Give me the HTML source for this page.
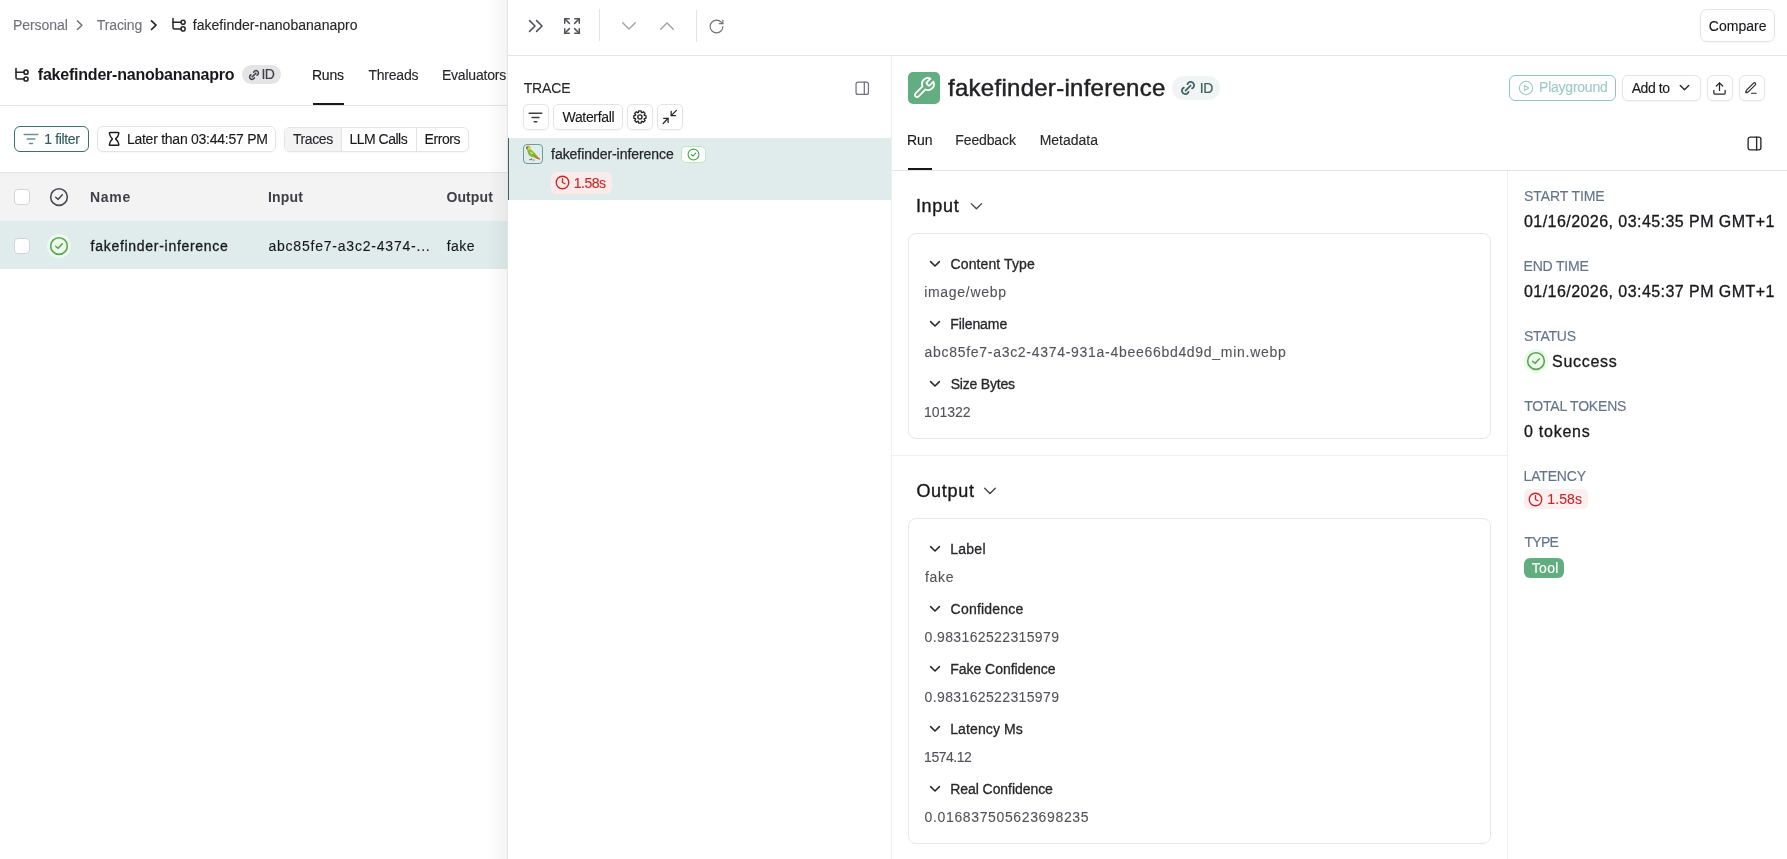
<!DOCTYPE html>
<html><head><meta charset="utf-8">
<style>
*{box-sizing:border-box;margin:0;padding:0}
html,body{will-change:transform;width:1787px;height:859px;overflow:hidden;background:#fff;font-family:"Liberation Sans",sans-serif;color:#18181b;font-size:14px;position:relative}
.a{position:absolute}
.t{position:absolute;white-space:nowrap;line-height:1}
svg.a{display:block;overflow:visible}
</style></head><body>
<div class="t" style="left:12.90px;top:18.00px;font-size:14px;color:#71717a;letter-spacing:-0.057px;-webkit-text-stroke:0.12px #71717a;">Personal</div>
<svg class="a" style="left:74px;top:18px" width="12" height="14" viewBox="74 18 12 14" fill="none" stroke="#71717a" stroke-width="1.5" stroke-linecap="round" stroke-linejoin="round"><path d="M77.4,20.9 L81.9,25.2 L77.4,29.5"/></svg>
<div class="t" style="left:96.70px;top:18.00px;font-size:14px;color:#71717a;letter-spacing:-0.083px;-webkit-text-stroke:0.12px #71717a;">Tracing</div>
<svg class="a" style="left:148px;top:18px" width="12" height="14" viewBox="148 18 12 14" fill="none" stroke="#27272a" stroke-width="1.7" stroke-linecap="round" stroke-linejoin="round"><path d="M151.5,20.9 L156,25.2 L151.5,29.5"/></svg>
<svg class="a" style="left:170px;top:16px" width="18" height="18" viewBox="170 16 18 18" fill="none" stroke="#27272a" stroke-width="1.5" stroke-linecap="round" stroke-linejoin="round"><path d="M173,18.6 V27.4 a1.5,1.5 0 0 0 1.5,1.5 H181"/><path d="M173,22.2 H181"/><circle cx="183.1" cy="22.2" r="2.05"/><circle cx="183.1" cy="28.9" r="2.05"/></svg>
<div class="t" style="left:192.80px;top:18.00px;font-size:14px;color:#27272a;letter-spacing:0.022px;-webkit-text-stroke:0.12px #27272a;">fakefinder-nanobananapro</div>
<svg class="a" style="left:12px;top:65px" width="20" height="20" viewBox="12 65 20 20" fill="none" stroke="#27272a" stroke-width="1.6" stroke-linecap="round" stroke-linejoin="round"><path d="M16,68.6 V77.5 a1.5,1.5 0 0 0 1.5,1.5 H24"/><path d="M16,72.2 H24"/><circle cx="26" cy="72.2" r="2.05"/><circle cx="26" cy="79" r="2.05"/></svg>
<div class="t" style="left:37.80px;top:67.00px;font-size:16px;color:#18181b;font-weight:bold;letter-spacing:-0.217px;">fakefinder-nanobananapro</div>
<div class="a" style="left:242px;top:65px;width:39px;height:19px;border-radius:10px;background:#e4e4e7"></div>
<svg class="a" style="left:243.95px;top:64.85px" width="20" height="20" viewBox="-10 -10 20 20" fill="none" stroke="#3f3f46" stroke-width="2.083" stroke-linecap="round"><g transform="scale(0.72)"><path d="M-0.495,-3.863 A3.4,3.4 0 1 1 4.137,0.381"/><path d="M0.495,3.863 A3.4,3.4 0 1 1 -4.137,-0.381"/><path d="M-2.45,2.55 L2.55,-2.45"/></g></svg>
<div class="t" style="left:261.60px;top:67.00px;font-size:14px;color:#3f3f46;letter-spacing:-0.700px;-webkit-text-stroke:0.15px #3f3f46;">ID</div>
<div class="t" style="left:311.90px;top:68.00px;font-size:14px;color:#18181b;letter-spacing:-0.167px;-webkit-text-stroke:0.12px #18181b;">Runs</div>
<div class="t" style="left:368.40px;top:68.00px;font-size:14px;color:#27272a;letter-spacing:-0.217px;-webkit-text-stroke:0.12px #27272a;">Threads</div>
<div class="t" style="left:441.90px;top:68.00px;font-size:14px;color:#27272a;letter-spacing:-0.200px;-webkit-text-stroke:0.12px #27272a;">Evaluators</div>
<div class="a" style="left:313px;top:103px;width:31px;height:2px;background:#18181b"></div>
<div class="a" style="left:0px;top:105px;width:507px;height:1px;background:#e4e4e7"></div>
<div class="a" style="left:14px;top:126px;width:75px;height:26px;border:1px solid #3f6e6c;border-radius:6px"></div>
<svg class="a" style="left:22px;top:130px;" width="18" height="18" viewBox="0 0 24 24" fill="none" stroke="#6f918f" stroke-width="2.1" stroke-linecap="round" stroke-linejoin="round"><path d="M3 6h18"/><path d="M7 12h10"/><path d="M10 18h4"/></svg>
<div class="t" style="left:44.30px;top:132.00px;font-size:14px;color:#2c5c5a;letter-spacing:-0.371px;-webkit-text-stroke:0.12px #2c5c5a;">1 filter</div>
<div class="a" style="left:97px;top:126px;width:179px;height:26px;border:1px solid #e4e4e7;border-radius:6px;box-shadow:0 1px 2px rgba(0,0,0,0.04)"></div>
<svg class="a" style="left:104px;top:128px" width="20" height="22" viewBox="104 128 20 22" fill="none" stroke="#18181b" stroke-width="1.45" stroke-linecap="round" stroke-linejoin="round"><path d="M110.2,132.5 H118 Q118.9,132.5 118.8,133.5 C118.6,135.6 117.4,137.3 115.6,138.9 C117.4,140.5 118.6,142.2 118.8,144.3 Q118.9,145.3 118,145.3 H110.2 Q109.3,145.3 109.4,144.3 C109.6,142.2 110.8,140.5 112.4,138.9 C110.8,137.3 109.6,135.6 109.4,133.5 Q109.3,132.5 110.2,132.5 Z"/></svg>
<div class="t" style="left:126.90px;top:132.00px;font-size:14px;color:#18181b;letter-spacing:-0.252px;-webkit-text-stroke:0.12px #18181b;">Later than 03:44:57 PM</div>
<div class="a" style="left:284px;top:127px;width:185px;height:25px;border:1px solid #e4e4e7;border-radius:6px;box-shadow:0 1px 2px rgba(0,0,0,0.04);overflow:hidden"></div>
<div class="a" style="left:285px;top:128px;width:56px;height:23px;background:#f4f4f5;border-radius:5px 0 0 5px"></div>
<div class="a" style="left:341px;top:128px;width:1px;height:23px;background:#e4e4e7"></div>
<div class="a" style="left:416px;top:128px;width:1px;height:23px;background:#e4e4e7"></div>
<div class="t" style="left:293.00px;top:132.00px;font-size:14px;color:#27272a;letter-spacing:-0.420px;-webkit-text-stroke:0.12px #27272a;">Traces</div>
<div class="t" style="left:349.40px;top:132.00px;font-size:14px;color:#18181b;letter-spacing:-0.487px;-webkit-text-stroke:0.12px #18181b;">LLM Calls</div>
<div class="t" style="left:424.50px;top:132.00px;font-size:14px;color:#18181b;letter-spacing:-0.400px;-webkit-text-stroke:0.12px #18181b;">Errors</div>
<div class="a" style="left:0px;top:172px;width:507px;height:1px;background:#e4e4e7"></div>
<div class="a" style="left:0px;top:173px;width:507px;height:48px;background:#f3f3f4"></div>
<div class="a" style="left:0px;top:221px;width:507px;height:48px;background:#dfeceb"></div>
<div class="a" style="left:14px;top:189px;width:16px;height:16px;background:#fff;border:1px solid #d4d4d8;border-radius:4px"></div>
<div class="a" style="left:14px;top:238px;width:16px;height:16px;background:#fff;border:1px solid #d4d4d8;border-radius:4px"></div>
<svg class="a" style="left:49px;top:187px;" width="20" height="20" viewBox="0 0 24 24" fill="none" stroke="#4a4a55" stroke-width="1.9" stroke-linecap="round" stroke-linejoin="round"><circle cx="12" cy="12" r="10"/><path d="M8 12.3 L11 14.8 L16 9.4"/></svg>
<div class="a" style="left:47px;top:234px;width:24px;height:24px;border-radius:50%;background:#eef8ee"></div>
<svg class="a" style="left:49px;top:236px;" width="20" height="20" viewBox="0 0 24 24" fill="none" stroke="#55a84c" stroke-width="1.9" stroke-linecap="round" stroke-linejoin="round"><circle cx="12" cy="12" r="10"/><path d="M8 12.3 L11 14.8 L16 9.4"/></svg>
<div class="t" style="left:89.90px;top:190.00px;font-size:14px;color:#3f3f46;font-weight:bold;letter-spacing:0.767px;">Name</div>
<div class="t" style="left:268.10px;top:190.00px;font-size:14px;color:#3f3f46;font-weight:bold;letter-spacing:0.125px;">Input</div>
<div class="t" style="left:446.40px;top:190.00px;font-size:14px;color:#3f3f46;font-weight:bold;letter-spacing:0.120px;">Output</div>
<div class="t" style="left:90.60px;top:239.00px;font-size:14px;color:#18181b;letter-spacing:0.711px;-webkit-text-stroke:0.3px #18181b;">fakefinder-inference</div>
<div class="t" style="left:268.40px;top:239.00px;font-size:14px;color:#18181b;letter-spacing:0.790px;-webkit-text-stroke:0.12px #18181b;">abc85fe7-a3c2-4374-...</div>
<div class="t" style="left:446.80px;top:239.00px;font-size:14px;color:#18181b;letter-spacing:0.433px;-webkit-text-stroke:0.12px #18181b;">fake</div>
<div class="a" style="left:487px;top:0px;width:20px;height:859px;background:linear-gradient(to right,rgba(0,0,0,0),rgba(0,0,0,0.045))"></div>
<div class="a" style="left:507px;top:0px;width:1px;height:859px;background:#e4e4e7"></div>
<svg class="a" style="left:526px;top:17px" width="20" height="18" viewBox="526 17 20 18" fill="none" stroke="#52525b" stroke-width="1.6" stroke-linecap="round" stroke-linejoin="round"><path d="M529.6,20.6 L535,26 L529.6,31.4"/><path d="M536.6,20.6 L542,26 L536.6,31.4"/></svg>
<svg class="a" style="left:562px;top:16px" width="20" height="20" viewBox="562 16 20 20" fill="none" stroke="#52525b" stroke-width="1.5" stroke-linecap="round" stroke-linejoin="round"><path d="M564.7,23.2 V18.7 H569.2"/><path d="M564.7,18.7 L569.4,23.4"/><path d="M574.8,18.7 H579.3 V23.2"/><path d="M579.3,18.7 L574.6,23.4"/><path d="M564.7,28.8 V33.3 H569.2"/><path d="M564.7,33.3 L569.4,28.6"/><path d="M574.8,33.3 H579.3 V28.8"/><path d="M579.3,33.3 L574.6,28.6"/></svg>
<div class="a" style="left:599px;top:9px;width:1px;height:32px;background:#e4e4e7"></div>
<svg class="a" style="left:620px;top:20px" width="18" height="12" viewBox="620 20 18 12" fill="none" stroke="#a1a1aa" stroke-width="1.4" stroke-linecap="round" stroke-linejoin="round"><path d="M622.7,22.7 L629,29 L635.3,22.7"/></svg>
<svg class="a" style="left:658px;top:20px" width="18" height="12" viewBox="658 20 18 12" fill="none" stroke="#a1a1aa" stroke-width="1.4" stroke-linecap="round" stroke-linejoin="round"><path d="M660.7,29.3 L667,23 L673.3,29.3"/></svg>
<div class="a" style="left:696px;top:10px;width:1px;height:32px;background:#e4e4e7"></div>
<svg class="a" style="left:707.5px;top:17.5px;" width="17" height="17" viewBox="0 0 24 24" fill="none" stroke="#71717a" stroke-width="1.6" stroke-linecap="round" stroke-linejoin="round"><path d="M21 12a9 9 0 1 1-9-9c2.52 0 4.93 1 6.74 2.74L21 8"/><path d="M21 3v5h-5"/></svg>
<div class="a" style="left:1700px;top:9px;width:75px;height:33px;border:1px solid #e4e4e7;border-radius:7px;box-shadow:0 1px 2px rgba(0,0,0,0.04)"></div>
<div class="t" style="left:1708.80px;top:19.00px;font-size:14px;color:#18181b;letter-spacing:0.033px;-webkit-text-stroke:0.12px #18181b;">Compare</div>
<div class="a" style="left:508px;top:55px;width:1279px;height:1px;background:#e4e4e7"></div>
<div class="t" style="left:523.70px;top:81.00px;font-size:14px;color:#27272a;letter-spacing:-0.150px;-webkit-text-stroke:0.12px #27272a;">TRACE</div>
<svg class="a" style="left:853.5px;top:79.5px;" width="16.5" height="16.5" viewBox="0 0 24 24" fill="none" stroke="#71717a" stroke-width="1.8" stroke-linecap="round" stroke-linejoin="round"><rect width="18" height="18" x="3" y="3" rx="3"/><path d="M15 3v18"/></svg>
<div class="a" style="left:523px;top:104px;width:26px;height:26px;border:1px solid #e4e4e7;border-radius:5px;box-shadow:0 1px 2px rgba(0,0,0,0.04)"></div>
<svg class="a" style="left:527px;top:109px;" width="17" height="17" viewBox="0 0 24 24" fill="none" stroke="#3f3f46" stroke-width="1.8" stroke-linecap="round" stroke-linejoin="round"><path d="M3 6h18"/><path d="M7 12h10"/><path d="M10 18h4"/></svg>
<div class="a" style="left:553px;top:104px;width:70px;height:26px;border:1px solid #e4e4e7;border-radius:5px;box-shadow:0 1px 2px rgba(0,0,0,0.04)"></div>
<div class="t" style="left:562.60px;top:110.00px;font-size:14px;color:#18181b;letter-spacing:-0.350px;-webkit-text-stroke:0.12px #18181b;">Waterfall</div>
<div class="a" style="left:627px;top:104px;width:26px;height:26px;border:1px solid #e4e4e7;border-radius:5px;box-shadow:0 1px 2px rgba(0,0,0,0.04)"></div>
<svg class="a" style="left:630px;top:107px" width="20" height="20" viewBox="630 107 20 20" fill="none" stroke="#27272a" stroke-width="1.35" stroke-linecap="round" stroke-linejoin="round"><path d="M638.35,112.51 L638.71,110.86 L641.09,110.86 L641.45,112.51 L641.98,112.73 L643.39,111.82 L645.08,113.51 L644.17,114.92 L644.39,115.45 L646.04,115.81 L646.04,118.19 L644.39,118.55 L644.17,119.08 L645.08,120.49 L643.39,122.18 L641.98,121.27 L641.45,121.49 L641.09,123.14 L638.71,123.14 L638.35,121.49 L637.82,121.27 L636.41,122.18 L634.72,120.49 L635.63,119.08 L635.41,118.55 L633.76,118.19 L633.76,115.81 L635.41,115.45 L635.63,114.92 L634.72,113.51 L636.41,111.82 L637.82,112.73Z"/><circle cx="639.9" cy="117" r="2.1"/></svg>
<div class="a" style="left:657px;top:104px;width:26px;height:26px;border:1px solid #e4e4e7;border-radius:5px;box-shadow:0 1px 2px rgba(0,0,0,0.04)"></div>
<svg class="a" style="left:660px;top:107px" width="20" height="20" viewBox="660 107 20 20" fill="none" stroke="#27272a" stroke-width="1.25" stroke-linecap="round" stroke-linejoin="round"><path d="M671.2,111.3 V115.6 H675.5"/><path d="M671.2,115.6 L676.4,110.4"/><path d="M663.6,118.3 H668.1 V122.6"/><path d="M668.1,118.3 L663.2,123.5"/></svg>
<div class="a" style="left:508px;top:138px;width:383px;height:62px;background:#dfeceb"></div>
<div class="a" style="left:508px;top:138px;width:1.3px;height:62px;background:#3d625f"></div>
<div class="a" style="left:523px;top:144px;width:20px;height:20px;border:1px solid #6a9e9d;border-radius:4px"></div>
<svg class="a" style="left:520px;top:141px" width="26" height="26" viewBox="0 0 26 26"><path d="M7.2,9 C8,7.5 10,7.6 11.2,8.8 C13.5,10.5 16,13.5 18,16 L20.3,18.6 C18.5,18.2 16.5,17.4 15,16.8 C13,16 11,15.8 10,15 C8.5,13.8 7.5,11.5 7.2,9z" fill="#7cb83a"/><path d="M9.5,10.5 C11,10 12.5,11.2 13.5,12.5 L11,13.5z" fill="#c5e04a"/><path d="M14,13.5 C15.5,14.5 17,15.8 18,16.5 L20.3,18.6 C18.5,18.3 16.8,17.6 15.5,17 z" fill="#d2702a"/><path d="M17,16 L18.5,17 L20.3,18.6 L18.6,18z" fill="#c83a22"/><circle cx="8.6" cy="6.9" r="2.3" fill="#d9c83a"/><path d="M6.3,6.2 C6.8,5.6 7.4,5.6 7.6,6 L7.4,8.6 C6.6,8.6 6.1,7.4 6.3,6.2z" fill="#555a60"/><path d="M7,5.6 C7.6,5 8.4,5 8.6,5.3 L7.8,6.3z" fill="#c0502a"/><path d="M9.2,18.6 H12 M11.5,17.4 L11.8,18.6 M12.6,19 H14.6" stroke="#6b6b6b" stroke-width="0.9" fill="none"/></svg>
<div class="t" style="left:551.10px;top:147.00px;font-size:14px;color:#27272a;letter-spacing:-0.058px;-webkit-text-stroke:0.25px #27272a;">fakefinder-inference</div>
<div class="a" style="left:681px;top:146px;width:25px;height:17px;background:#fff;border:1px solid #bbe8c0;border-radius:5px"></div>
<svg class="a" style="left:687px;top:148px;" width="13" height="13" viewBox="0 0 24 24" fill="none" stroke="#43a047" stroke-width="2" stroke-linecap="round" stroke-linejoin="round"><circle cx="12" cy="12" r="10"/><path d="M8 12.3 L11 14.8 L16 9.4"/></svg>
<div class="a" style="left:551px;top:172px;width:61px;height:22px;background:#fcebeb;border-radius:6px"></div>
<svg class="a" style="left:555px;top:175px;" width="15" height="15" viewBox="0 0 24 24" fill="none" stroke="#c62828" stroke-width="2.2" stroke-linecap="round" stroke-linejoin="round"><circle cx="12" cy="12" r="10"/><polyline points="12 6 12 12 16 14"/></svg>
<div class="t" style="left:573.80px;top:176.00px;font-size:14px;color:#c62828;letter-spacing:-0.500px;-webkit-text-stroke:0.12px #c62828;">1.58s</div>
<div class="a" style="left:891px;top:56px;width:1px;height:803px;background:#efeff1"></div>
<div class="a" style="left:908px;top:72px;width:32px;height:32px;background:#62ae81;border-radius:5px"></div>
<svg class="a" style="left:912px;top:76px;" width="24" height="24" viewBox="0 0 24 24" fill="none" stroke="#fff" stroke-width="1.8" stroke-linecap="round" stroke-linejoin="round"><path d="M14.7 6.3a1 1 0 0 0 0 1.4l1.6 1.6a1 1 0 0 0 1.4 0l3.77-3.770a6 6 0 0 1-7.94 7.94l-6.91 6.91a2.12 2.12 0 0 1-3-3l6.91-6.91a6 6 0 0 1 7.94-7.94l-3.76 3.76z"/></svg>
<div class="t" style="left:948.00px;top:76.00px;font-size:24px;color:#222225;letter-spacing:0.274px;-webkit-text-stroke:0.45px #222225;">fakefinder-inference</div>
<div class="a" style="left:1172px;top:76px;width:48px;height:24px;background:#f0f5f4;border-radius:12px"></div>
<svg class="a" style="left:1177.9px;top:77.65px" width="20" height="20" viewBox="-10 -10 20 20" fill="none" stroke="#3f6461" stroke-width="1.800" stroke-linecap="round"><g transform="scale(1.0)"><path d="M-0.495,-3.863 A3.4,3.4 0 1 1 4.137,0.381"/><path d="M0.495,3.863 A3.4,3.4 0 1 1 -4.137,-0.381"/><path d="M-2.45,2.55 L2.55,-2.45"/></g></svg>
<div class="t" style="left:1199.70px;top:81.00px;font-size:14px;color:#3d5f5b;letter-spacing:-0.300px;-webkit-text-stroke:0.2px #3d5f5b;">ID</div>
<div class="a" style="left:1509px;top:75px;width:107px;height:26px;border:1px solid #8fc5c0;border-radius:6px"></div>
<svg class="a" style="left:1518px;top:80px;" width="16" height="16" viewBox="0 0 24 24" fill="none" stroke="#9ccac5" stroke-width="1.6" stroke-linecap="round" stroke-linejoin="round"><circle cx="12" cy="12" r="10"/><polygon points="10 8 16 12 10 16 10 8"/></svg>
<div class="t" style="left:1539.10px;top:80.00px;font-size:14px;color:#9ccac5;letter-spacing:-0.244px;-webkit-text-stroke:0.12px #9ccac5;">Playground</div>
<div class="a" style="left:1622px;top:75px;width:79px;height:26px;border:1px solid #e4e4e7;border-radius:6px;box-shadow:0 1px 2px rgba(0,0,0,0.04)"></div>
<div class="t" style="left:1631.70px;top:81.00px;font-size:14px;color:#18181b;letter-spacing:-0.440px;-webkit-text-stroke:0.12px #18181b;">Add to</div>
<svg class="a" style="left:1677px;top:82px" width="16" height="12" viewBox="1677 82 16 12" fill="none" stroke="#27272a" stroke-width="1.4" stroke-linecap="round" stroke-linejoin="round"><path d="M1680.3,85.5 L1684.5,89.7 L1688.7,85.5"/></svg>
<div class="a" style="left:1707px;top:75px;width:26px;height:26px;border:1px solid #e4e4e7;border-radius:6px;box-shadow:0 1px 2px rgba(0,0,0,0.04)"></div>
<svg class="a" style="left:1712px;top:80.5px;" width="15" height="15" viewBox="0 0 24 24" fill="none" stroke="#27272a" stroke-width="2" stroke-linecap="round" stroke-linejoin="round"><path d="M21 15v4a2 2 0 0 1-2 2H5a2 2 0 0 1-2-2v-4"/><polyline points="17 8 12 3 7 8"/><line x1="12" x2="12" y1="3" y2="15"/></svg>
<div class="a" style="left:1739px;top:75px;width:26px;height:26px;border:1px solid #e4e4e7;border-radius:6px;box-shadow:0 1px 2px rgba(0,0,0,0.04)"></div>
<svg class="a" style="left:1744px;top:81px;" width="14" height="14" viewBox="0 0 24 24" fill="none" stroke="#27272a" stroke-width="2" stroke-linecap="round" stroke-linejoin="round"><path d="M13 21h8"/><path d="M16.376 3.622a1 1 0 0 1 3.002 3.002L7.368 18.635a2 2 0 0 1-.855.506l-2.872.838a.5.5 0 0 1-.62-.62l.838-2.872a2 2 0 0 1 .506-.854z"/></svg>
<div class="t" style="left:907.10px;top:133.00px;font-size:14px;color:#18181b;letter-spacing:-0.100px;-webkit-text-stroke:0.12px #18181b;">Run</div>
<div class="t" style="left:955.30px;top:133.00px;font-size:14px;color:#27272a;letter-spacing:-0.129px;-webkit-text-stroke:0.12px #27272a;">Feedback</div>
<div class="t" style="left:1039.70px;top:133.00px;font-size:14px;color:#27272a;letter-spacing:-0.014px;-webkit-text-stroke:0.12px #27272a;">Metadata</div>
<div class="a" style="left:908px;top:168px;width:24px;height:2px;background:#18181b"></div>
<svg class="a" style="left:1745.5px;top:134.5px;" width="17" height="17" viewBox="0 0 24 24" fill="none" stroke="#27272a" stroke-width="1.9" stroke-linecap="round" stroke-linejoin="round"><rect width="18" height="18" x="3" y="3" rx="3"/><path d="M15 3v18"/></svg>
<div class="a" style="left:892px;top:170px;width:895px;height:1px;background:#e4e4e7"></div>
<div class="a" style="left:1507px;top:171px;width:1px;height:688px;background:#ededf0"></div>
<div class="t" style="left:915.90px;top:197.00px;font-size:18px;color:#18181b;letter-spacing:0.725px;-webkit-text-stroke:0.35px #18181b;">Input</div>
<svg class="a" style="left:968px;top:200px" width="16" height="12" viewBox="968 200 16 12" fill="none" stroke="#3f3f46" stroke-width="1.3" stroke-linecap="round" stroke-linejoin="round"><path d="M971.2,203.6 L976.4,208.8 L981.6,203.6"/></svg>
<div class="a" style="left:908px;top:233px;width:583px;height:206px;border:1px solid #e7e7ea;border-radius:8px"></div>
<svg class="a" style="left:928px;top:255px" width="14" height="10" viewBox="928 255 14 10" fill="none" stroke="#27272a" stroke-width="1.5" stroke-linecap="round" stroke-linejoin="round"><path d="M930.6,261.6 L935,266.0 L939.4,261.6"/></svg>
<div class="t" style="left:950.60px;top:257.00px;font-size:14px;color:#27272a;letter-spacing:0.100px;-webkit-text-stroke:0.3px #27272a;">Content Type</div>
<div class="t" style="left:924.20px;top:285.00px;font-size:14px;color:#52525b;letter-spacing:0.700px;-webkit-text-stroke:0.1px #52525b;">image/webp</div>
<svg class="a" style="left:928px;top:315px" width="14" height="10" viewBox="928 315 14 10" fill="none" stroke="#27272a" stroke-width="1.5" stroke-linecap="round" stroke-linejoin="round"><path d="M930.6,321.6 L935,326.0 L939.4,321.6"/></svg>
<div class="t" style="left:950.20px;top:317.00px;font-size:14px;color:#27272a;letter-spacing:-0.086px;-webkit-text-stroke:0.3px #27272a;">Filename</div>
<div class="t" style="left:924.50px;top:345.00px;font-size:14px;color:#52525b;letter-spacing:0.709px;-webkit-text-stroke:0.1px #52525b;">abc85fe7-a3c2-4374-931a-4bee66bd4d9d_min.webp</div>
<svg class="a" style="left:928px;top:375px" width="14" height="10" viewBox="928 375 14 10" fill="none" stroke="#27272a" stroke-width="1.5" stroke-linecap="round" stroke-linejoin="round"><path d="M930.6,381.6 L935,386.0 L939.4,381.6"/></svg>
<div class="t" style="left:950.70px;top:377.00px;font-size:14px;color:#27272a;letter-spacing:-0.189px;-webkit-text-stroke:0.3px #27272a;">Size Bytes</div>
<div class="t" style="left:924.10px;top:405.00px;font-size:14px;color:#52525b;letter-spacing:-0.060px;-webkit-text-stroke:0.1px #52525b;">101322</div>
<div class="a" style="left:892px;top:455px;width:615px;height:1px;background:#f0f0f2"></div>
<div class="t" style="left:916.40px;top:482.00px;font-size:18px;color:#18181b;letter-spacing:0.700px;-webkit-text-stroke:0.35px #18181b;">Output</div>
<svg class="a" style="left:982px;top:485px" width="16" height="12" viewBox="982 485 16 12" fill="none" stroke="#3f3f46" stroke-width="1.3" stroke-linecap="round" stroke-linejoin="round"><path d="M984.7,488.2 L990,493.5 L995.3,488.2"/></svg>
<div class="a" style="left:908px;top:518px;width:583px;height:326px;border:1px solid #e7e7ea;border-radius:8px"></div>
<svg class="a" style="left:928px;top:540px" width="14" height="10" viewBox="928 540 14 10" fill="none" stroke="#27272a" stroke-width="1.5" stroke-linecap="round" stroke-linejoin="round"><path d="M930.6,546.6 L935,551.0 L939.4,546.6"/></svg>
<div class="t" style="left:950.20px;top:542.00px;font-size:14px;color:#27272a;letter-spacing:0.275px;-webkit-text-stroke:0.3px #27272a;">Label</div>
<div class="t" style="left:924.90px;top:570.00px;font-size:14px;color:#52525b;letter-spacing:0.767px;-webkit-text-stroke:0.1px #52525b;">fake</div>
<svg class="a" style="left:928px;top:600px" width="14" height="10" viewBox="928 600 14 10" fill="none" stroke="#27272a" stroke-width="1.5" stroke-linecap="round" stroke-linejoin="round"><path d="M930.6,606.6 L935,611.0 L939.4,606.6"/></svg>
<div class="t" style="left:950.60px;top:602.00px;font-size:14px;color:#27272a;letter-spacing:0.211px;-webkit-text-stroke:0.3px #27272a;">Confidence</div>
<div class="t" style="left:924.60px;top:630.00px;font-size:14px;color:#52525b;letter-spacing:0.369px;-webkit-text-stroke:0.1px #52525b;">0.983162522315979</div>
<svg class="a" style="left:928px;top:660px" width="14" height="10" viewBox="928 660 14 10" fill="none" stroke="#27272a" stroke-width="1.5" stroke-linecap="round" stroke-linejoin="round"><path d="M930.6,666.6 L935,671.0 L939.4,666.6"/></svg>
<div class="t" style="left:950.20px;top:662.00px;font-size:14px;color:#27272a;letter-spacing:-0.029px;-webkit-text-stroke:0.3px #27272a;">Fake Confidence</div>
<div class="t" style="left:924.60px;top:690.00px;font-size:14px;color:#52525b;letter-spacing:0.369px;-webkit-text-stroke:0.1px #52525b;">0.983162522315979</div>
<svg class="a" style="left:928px;top:720px" width="14" height="10" viewBox="928 720 14 10" fill="none" stroke="#27272a" stroke-width="1.5" stroke-linecap="round" stroke-linejoin="round"><path d="M930.6,726.6 L935,731.0 L939.4,726.6"/></svg>
<div class="t" style="left:950.20px;top:722.00px;font-size:14px;color:#27272a;letter-spacing:0.111px;-webkit-text-stroke:0.3px #27272a;">Latency Ms</div>
<div class="t" style="left:924.10px;top:750.00px;font-size:14px;color:#52525b;letter-spacing:-0.483px;-webkit-text-stroke:0.1px #52525b;">1574.12</div>
<svg class="a" style="left:928px;top:780px" width="14" height="10" viewBox="928 780 14 10" fill="none" stroke="#27272a" stroke-width="1.5" stroke-linecap="round" stroke-linejoin="round"><path d="M930.6,786.6 L935,791.0 L939.4,786.6"/></svg>
<div class="t" style="left:950.20px;top:782.00px;font-size:14px;color:#27272a;letter-spacing:-0.057px;-webkit-text-stroke:0.3px #27272a;">Real Confidence</div>
<div class="t" style="left:924.60px;top:810.00px;font-size:14px;color:#52525b;letter-spacing:0.637px;-webkit-text-stroke:0.1px #52525b;">0.016837505623698235</div>
<div class="t" style="left:1524.00px;top:189.00px;font-size:14px;color:#64748b;letter-spacing:-0.089px;-webkit-text-stroke:0.15px #64748b;">START TIME</div>
<div class="t" style="left:1524.00px;top:214.00px;font-size:16px;color:#18181b;letter-spacing:0.446px;-webkit-text-stroke:0.3px #18181b;">01/16/2026, 03:45:35 PM GMT+1</div>
<div class="t" style="left:1523.50px;top:259.00px;font-size:14px;color:#64748b;letter-spacing:-0.186px;-webkit-text-stroke:0.15px #64748b;">END TIME</div>
<div class="t" style="left:1524.00px;top:284.00px;font-size:16px;color:#18181b;letter-spacing:0.446px;-webkit-text-stroke:0.3px #18181b;">01/16/2026, 03:45:37 PM GMT+1</div>
<div class="t" style="left:1523.90px;top:329.00px;font-size:14px;color:#64748b;letter-spacing:-0.180px;-webkit-text-stroke:0.15px #64748b;">STATUS</div>
<div class="a" style="left:1524px;top:349px;width:24px;height:24px;border-radius:50%;background:#eef8ee"></div>
<svg class="a" style="left:1526px;top:351px;" width="20" height="20" viewBox="0 0 24 24" fill="none" stroke="#55a84c" stroke-width="1.9" stroke-linecap="round" stroke-linejoin="round"><circle cx="12" cy="12" r="10"/><path d="M8 12.3 L11 14.8 L16 9.4"/></svg>
<div class="t" style="left:1552.10px;top:354.00px;font-size:16px;color:#18181b;letter-spacing:0.700px;-webkit-text-stroke:0.3px #18181b;">Success</div>
<div class="t" style="left:1524.20px;top:399.00px;font-size:14px;color:#64748b;letter-spacing:-0.182px;-webkit-text-stroke:0.15px #64748b;">TOTAL TOKENS</div>
<div class="t" style="left:1523.90px;top:424.00px;font-size:16px;color:#18181b;letter-spacing:0.771px;-webkit-text-stroke:0.3px #18181b;">0 tokens</div>
<div class="t" style="left:1523.60px;top:469.00px;font-size:14px;color:#64748b;letter-spacing:-0.183px;-webkit-text-stroke:0.15px #64748b;">LATENCY</div>
<div class="a" style="left:1524px;top:489px;width:64px;height:20px;background:#fcefef;border-radius:5px"></div>
<svg class="a" style="left:1528px;top:492px;" width="15" height="15" viewBox="0 0 24 24" fill="none" stroke="#c62828" stroke-width="2.2" stroke-linecap="round" stroke-linejoin="round"><circle cx="12" cy="12" r="10"/><polyline points="12 6 12 12 16 14"/></svg>
<div class="t" style="left:1547.30px;top:492.00px;font-size:14px;color:#c62828;letter-spacing:0.100px;-webkit-text-stroke:0.12px #c62828;">1.58s</div>
<div class="t" style="left:1524.40px;top:535.00px;font-size:14px;color:#64748b;letter-spacing:-0.667px;-webkit-text-stroke:0.15px #64748b;">TYPE</div>
<div class="a" style="left:1524px;top:558px;width:40px;height:20px;background:#62ad7f;border-radius:6px"></div>
<div class="t" style="left:1531.70px;top:561.00px;font-size:14px;color:#ffffff;letter-spacing:0.367px;-webkit-text-stroke:0.12px #ffffff;">Tool</div>
</body></html>
